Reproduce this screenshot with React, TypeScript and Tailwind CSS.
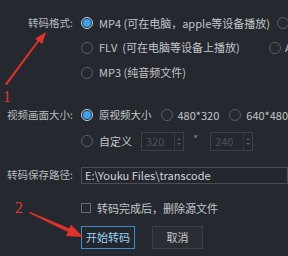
import React from "react";

const font = { fontFamily: '"Noto Sans CJK SC", "Noto Sans", sans-serif' };

function Radio({ on = false, className = "" }: { on?: boolean; className?: string }) {
  return on ? (
    <div className={"flex h-[12px] w-[12px] shrink-0 items-center justify-center rounded-full border border-[#c9d6e2] bg-[#26292f] " + className}>
      <div className="h-[8px] w-[8px] rounded-full bg-[#3aa2f2]" />
    </div>
  ) : (
    <div className={"h-[12px] w-[12px] shrink-0 rounded-full border border-[#5a5e65] " + className} />
  );
}

function Spin({ v, className = "" }: { v: string; className?: string }) {
  return (
    <div className={"flex h-[19px] w-[43px] shrink-0 items-center border border-[#3d4047] bg-[#24272d] " + className}>
      <span className="flex-1 pl-[4px] text-[11px] leading-none text-[#4d5158]">{v}</span>
      <div className="flex h-full w-[9px] flex-col items-center justify-center gap-[3px] border-l border-[#34373d]">
        <div className="h-0 w-0 border-x-[2px] border-b-[2px] border-x-transparent border-b-[#5a5e65]" />
        <div className="h-0 w-0 border-x-[2px] border-t-[2px] border-x-transparent border-t-[#5a5e65]" />
      </div>
    </div>
  );
}

function Label({ t }: { t?: string }) {
  return (
    <div className="w-[74px] shrink-0 whitespace-nowrap pr-[1px] text-right text-[10.5px] text-[#b9bbbf]">{t}</div>
  );
}

export default function App() {
  return (
    <div
      className="relative h-[256px] w-[288px] overflow-hidden bg-[#25282e] pt-[11px] text-[11px] text-[#c3c5c9]"
      style={font}
    >
      {/* row 1 */}
      <div className="flex h-[24px] items-center whitespace-nowrap">
        <Label t="转码格式:" />
        <Radio on className="ml-[7px]" />
        <span className="ml-[6px] shrink-0">MP4 (可在电脑，apple等设备播放)</span>
        <Radio className="ml-[7px]" />
        <span className="ml-[4px] shrink-0">3GP (可在手机播放)</span>
      </div>
      {/* row 2 */}
      <div className="flex h-[25px] items-center whitespace-nowrap">
        <Label />
        <Radio className="ml-[7px]" />
        <span className="ml-[6px] w-[170px] shrink-0">FLV&nbsp;&nbsp;(可在电脑等设备上播放)</span>
        <Radio />
        <span className="ml-[4px] shrink-0">AVI</span>
      </div>
      {/* row 3 */}
      <div className="flex h-[25px] items-center whitespace-nowrap">
        <Label />
        <Radio className="ml-[7px]" />
        <span className="ml-[6px] shrink-0">MP3 (纯音频文件)</span>
      </div>
      {/* row 4 */}
      <div className="mt-[18px] flex h-[24px] items-center whitespace-nowrap">
        <Label t="视频画面大小:" />
        <Radio on className="ml-[7px]" />
        <span className="ml-[6px] shrink-0 text-[10.5px]">原视频大小</span>
        <Radio className="ml-[9px]" />
        <span className="ml-[5px] shrink-0">480*320</span>
        <Radio className="ml-[10px]" />
        <span className="ml-[5px] shrink-0">640*480</span>
      </div>
      {/* row 5 */}
      <div className="mt-[1px] flex h-[26px] items-center whitespace-nowrap">
        <Label />
        <Radio className="ml-[7px]" />
        <span className="ml-[6px] shrink-0">自定义</span>
        <Spin v="320" className="ml-[9px]" />
        <span className="-mt-[6px] ml-[9px] mr-[12px] text-[#7a7d83]">*</span>
        <Spin v="240" />
      </div>
      {/* row 6 */}
      <div className="mt-[12px] flex h-[18px] items-center whitespace-nowrap">
        <Label t="转码保存路径:" />
        <div className="ml-[7px] flex h-[17px] flex-1 items-center border border-[#4a4d54] bg-[#24272d] pl-[3px] text-[#d3d5d8]">
          E:\Youku Files\transcode
        </div>
      </div>
      {/* row 7 */}
      <div className="mt-[16px] flex h-[16px] items-center whitespace-nowrap">
        <Label />
        <div className="ml-[7px] h-[10px] w-[10px] shrink-0 border border-[#6a6e75]" />
        <span className="ml-[6px]">转码完成后，删除源文件</span>
      </div>
      {/* row 8 */}
      <div className="mt-[10px] flex items-center whitespace-nowrap">
        <Label />
        <button className="ml-[7px] flex h-[23px] w-[54px] items-center justify-center border border-[#3b8ec6] bg-[#23262c] text-[11px] text-[#9ad2f6]">
          开始转码
        </button>
        <button className="ml-[17px] flex h-[23px] w-[51px] items-center justify-center border border-[#3c3f46] bg-[#2a2d33] text-[11px] text-[#c8cacd]">
          取消
        </button>
      </div>

      {/* annotations */}
      <span
        className="absolute left-[3px] top-[89px] text-[16px] leading-none text-[#dc3a33]"
        style={{ fontFamily: '"Liberation Serif", serif' }}
      >
        1
      </span>
      <span
        className="absolute left-[15px] top-[200px] text-[16px] leading-none text-[#dc3a33]"
        style={{ fontFamily: '"Liberation Serif", serif' }}
      >
        2
      </span>
      <svg className="pointer-events-none absolute left-0 top-0" width="288" height="256">
        <polygon points="5,84 7,85 40,40 38.5,39" fill="#e0322c" />
        <polygon points="46,32 42.2,44 35.2,38.8" fill="#e0322c" />
        <polygon points="29,213 29.6,211.8 69.5,228.5 68,232" fill="#e0322c" />
        <polygon points="83,237 66,236 71,224.5" fill="#e0322c" />
      </svg>
    </div>
  );
}
